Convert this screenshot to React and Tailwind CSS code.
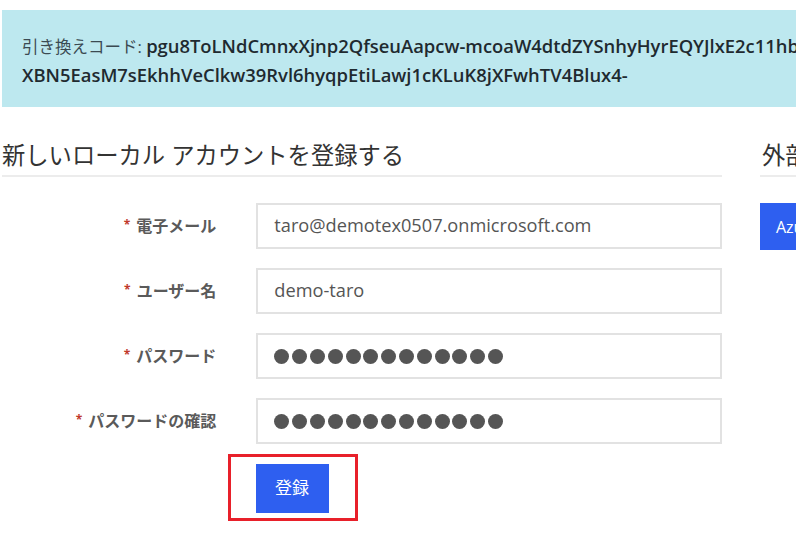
import React from "react";

const cjk = { fontFamily: '"Open Sans", "Noto Sans CJK JP", sans-serif' };

function Dots() {
  return (
    <div className="flex items-center gap-[2.8px]">
      {Array.from({ length: 13 }).map((_, i) => (
        <div key={i} className="w-[15px] h-[15px] rounded-full bg-[#555]" />
      ))}
    </div>
  );
}

function Row({ label, children }) {
  return (
    <div className="flex items-center">
      <div className="w-[215px] flex justify-end items-center gap-[6px] text-[16px] font-bold text-[#5a5a5a]">
        <span className="text-[#c0392b] text-[12px] leading-none -mt-[2px]">*</span>
        <span>{label}</span>
      </div>
      <div className="ml-[40px] w-[467px] h-[46px] border-2 border-[#e2e2e2] bg-white flex items-center pl-[16px] text-[18.2px] text-[#555]">
        {children}
      </div>
    </div>
  );
}

export default function App() {
  return (
    <div className="w-[796px] h-[540px] overflow-hidden bg-white" style={cjk}>
      <div className="mt-[10px] ml-[2px] w-[900px] h-[97px] bg-[#bde8ef] pl-[20px] pt-[22px] leading-[28px] text-[#1f2a30]">
        <div className="whitespace-nowrap">
          <span className="text-[#3b4a52] text-[16.5px]">引き換えコード: </span>
          <span className="font-semibold text-[18.4px]">pgu8ToLNdCmnxXjnp2QfseuAapcw-mcoaW4dtdZYSnhyHyrEQYJlxE2c11hb</span>
        </div>
        <div className="whitespace-nowrap font-semibold text-[18.4px]">XBN5EasM7sEkhhVeClkw39Rvl6hyqpEtiLawj1cKLuK8jXFwhTV4Blux4-</div>
      </div>

      <div className="flex ml-[2px] mt-[33px]">
        <div className="w-[720px] shrink-0">
          <div className="text-[23.3px] leading-[30px] text-[#333] pb-[5px] border-b-2 border-[#ececec]">
            新しいローカル アカウントを登録する
          </div>
          <div className="mt-[26px] flex flex-col gap-[19px]">
            <Row label="電子メール">taro@demotex0507.onmicrosoft.com</Row>
            <Row label="ユーザー名">demo-taro</Row>
            <Row label="パスワード"><Dots /></Row>
            <Row label="パスワードの確認"><Dots /></Row>
          </div>
          <div className="mt-[10px] ml-[226px] w-[130px] h-[67px] border-[3px] border-[#e8202a] flex items-center justify-center">
            <button className="w-[73px] h-[49px] bg-[#2e5ff0] text-white text-[17px] ml-[-2px] mt-[1px]">登録</button>
          </div>
        </div>
        <div className="ml-[38px] w-[200px] shrink-0">
          <div className="text-[23.3px] leading-[30px] text-[#333] pb-[5px] border-b-2 border-[#ececec] whitespace-nowrap pl-[2px]">
            外部サービスを使用してログイン
          </div>
          <div className="mt-[26px]">
            <button className="h-[47px] px-[16px] bg-[#2e5ff0] text-white text-[16px] whitespace-nowrap">AzureAD</button>
          </div>
        </div>
      </div>
    </div>
  );
}
